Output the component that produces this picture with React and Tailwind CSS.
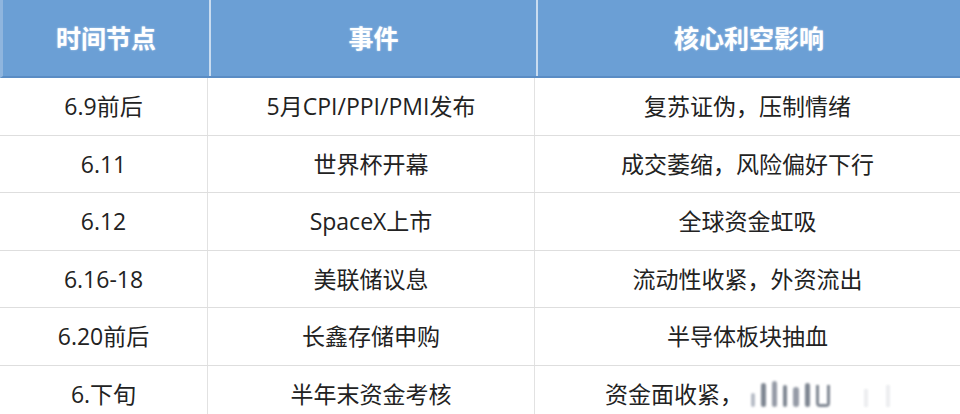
const rows = [
  { time: '6.9前后', event: '5月CPI/PPI/PMI发布', impact: '复苏证伪，压制情绪' },
  { time: '6.11', event: '世界杯开幕', impact: '成交萎缩，风险偏好下行' },
  { time: '6.12', event: 'SpaceX上市', impact: '全球资金虹吸' },
  { time: '6.16-18', event: '美联储议息', impact: '流动性收紧，外资流出' },
  { time: '6.20前后', event: '长鑫存储申购', impact: '半导体板块抽血' },
  { time: '6.下旬', event: '半年末资金考核', impact: '资金面收紧，', mark: true },
];

const Watermark = () => (
  <span className="inline-flex items-end gap-[6px] ml-2 h-[26px] opacity-70 blur-[1px]">
    <span className="w-[4px] h-[14px] bg-gray-400 rounded-sm" />
    <span className="w-[5px] h-[24px] bg-gray-600 rounded-sm" />
    <span className="w-[5px] h-[26px] bg-gray-500 rounded-sm" />
    <span className="w-[4px] h-[22px] bg-gray-600 rounded-sm" />
    <span className="w-[6px] h-[20px] bg-gray-500 rounded-sm" />
    <span className="w-[5px] h-[24px] bg-gray-600 rounded-sm" />
    <span className="w-[14px] h-[22px] border-[3px] border-t-0 border-gray-600 rounded-b-sm" />
    <span className="w-[4px] h-[18px] bg-gray-200 ml-7" />
    <span className="w-[4px] h-[22px] bg-gray-200 ml-3" />
  </span>
);

export default function App() {
  return (
    <div
      className="w-[960px] h-[414px] overflow-hidden bg-white text-[#222]"
      style={{ fontFamily: '"Open Sans", "Noto Sans CJK SC", sans-serif' }}
    >
      <div className="grid grid-cols-[208px_327px_1fr] h-[78px] bg-[#6b9fd5] border-l-[3px] border-[#8fb5de] border-b-2 border-b-[#5a8cc4]">
        {['时间节点', '事件', '核心利空影响'].map((h, i) => (
          <div
            key={h}
            className={`flex items-center justify-center text-white font-bold text-[25px] [text-shadow:0_0_2px_rgba(255,255,255,0.6)] ${i < 2 ? 'border-r-2 border-[#c9dcf0]' : ''}`}
            style={{ fontFamily: '"Noto Sans CJK SC", sans-serif' }}
          >
            {h}
          </div>
        ))}
      </div>
      {rows.map((r) => (
        <div key={r.time} className="grid grid-cols-[208px_327px_1fr] h-[57.5px] border-b border-[#dedede] text-[23px]">
          <div className="flex items-center justify-center border-r border-[#e2e2e2]">{r.time}</div>
          <div className="flex items-center justify-center border-r border-[#e2e2e2]">{r.event}</div>
          <div className="flex items-center justify-center">
            {r.impact}
            {r.mark && <Watermark />}
          </div>
        </div>
      ))}
    </div>
  );
}
